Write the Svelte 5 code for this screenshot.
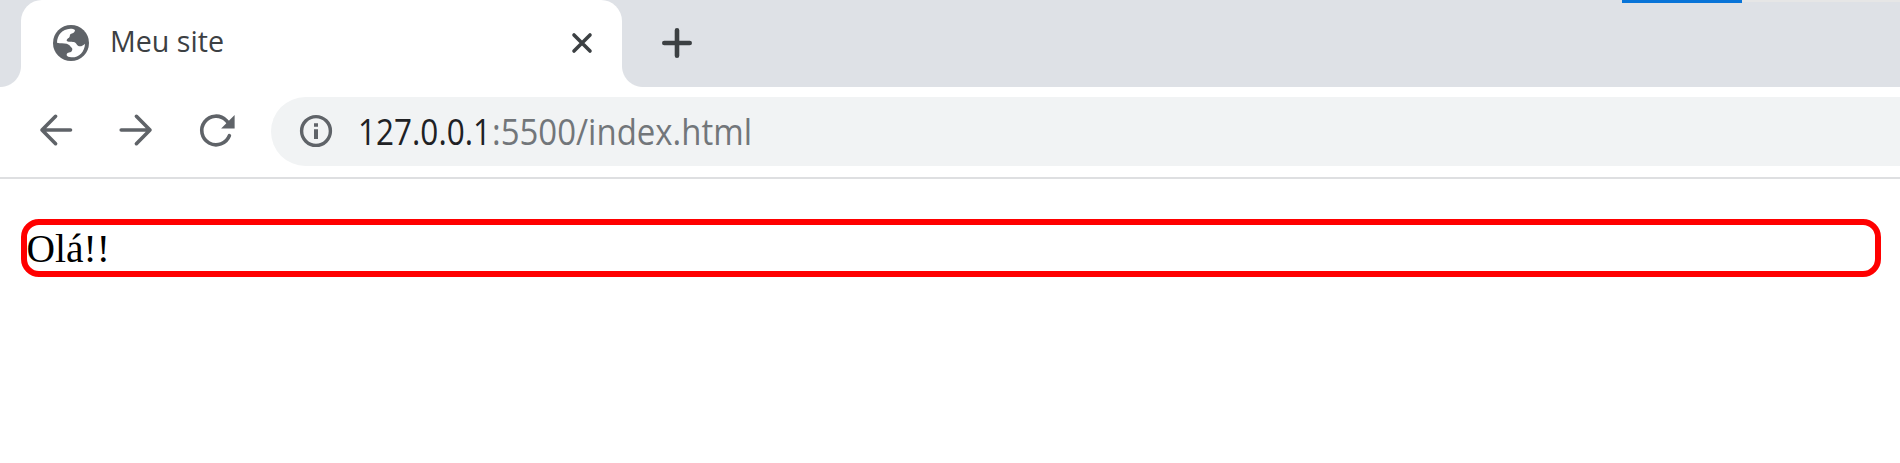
<script>
  const title = 'Meu site';
  const host = '127.0.0.1';
  const path = ':5500/index.html';
  const message = 'Olá!!';
</script>

<div class="browser">
  <header class="strip">
    <div class="tab">
      <svg class="globe" width="40" height="40" viewBox="0 0 120 120">
        <circle cx="60" cy="60" r="54" fill="#5f6368" />
        <path fill="#fff" d="M18 59C18 36 34 18 58 17C64 17 69 18 72 21C72 27 68 31 59 33C55 36 58 40 54 44C50 46 47 48 47 53C51 58 60 55 69 57C76 59 76 66 82 69C89 72 97 67 102 62C101 87 83 104 61 103C54 103 48 101 47 97C46 91 51 88 60 87C64 83 65 79 63 75C58 71 57 65 47 62C39 60 28 62 18 59Z" />
      </svg>
      <svg class="title" width="120" height="50">
        <text x="0" y="35" textLength="114" lengthAdjust="spacingAndGlyphs">{title}</text>
      </svg>
      <svg class="close" width="30" height="30" viewBox="0 0 30 30">
        <path d="M7 7L23 23M23 7L7 23" stroke="#3c4043" stroke-width="3.6" stroke-linecap="round" />
      </svg>
    </div>
    <svg class="plus" width="40" height="40" viewBox="0 0 40 40">
      <path d="M20 7.3V32.7M7.3 20H32.7" stroke="#3c4043" stroke-width="4.6" stroke-linecap="round" />
    </svg>
    <div class="progress"></div>
    <div class="edge"></div>
  </header>

  <nav class="toolbar">
    <svg class="nav" width="40" height="40" viewBox="0 0 40 40">
      <path d="M34.5 20H6M19.6 6.3L6 20L19.6 33.7" />
    </svg>
    <svg class="nav" width="40" height="40" viewBox="0 0 40 40">
      <path d="M5.2 20H34M20.4 6.3L34 20L20.4 33.7" />
    </svg>
    <svg class="nav" width="40" height="40" viewBox="0 0 40 40">
      <path d="M32.4 25.6A14.3 14.3 0 1 1 29.2 10.4L31 12.5" />
      <path class="head" d="M37.6 5V18.5H24.1Z" />
    </svg>
    <div class="address">
      <svg class="info" width="40" height="40" viewBox="0 0 40 40">
        <circle cx="20" cy="20" r="14.4" fill="none" stroke="#5f6368" stroke-width="3.4" />
        <path d="M18 12.2H22V15.8H18ZM18 18.2H22V28H18Z" fill="#5f6368" />
      </svg>
      <svg class="url" width="410" height="69">
        <text class="host" x="0" y="48" textLength="133" lengthAdjust="spacingAndGlyphs">{host}</text>
        <text class="path" x="134" y="48" textLength="260" lengthAdjust="spacingAndGlyphs">{path}</text>
      </svg>
    </div>
  </nav>

  <main>
    <p>{message}</p>
  </main>
</div>

<style>
  :global(body) {
    margin: 0;
    background: #fff;
  }
  .browser {
    width: 1900px;
    height: 463px;
    overflow: hidden;
    background: #fff;
  }
  svg {
    display: block;
    flex: none;
  }
  .strip {
    position: relative;
    display: flex;
    height: 86.6px;
    padding-left: 20.5px;
    background: #dee1e6;
  }
  .tab {
    position: relative;
    display: flex;
    box-sizing: border-box;
    width: 601.5px;
    height: 100%;
    padding-left: 30px;
    background: #fff;
    border-radius: 21px 21px 0 0;
  }
  .tab::before,
  .tab::after {
    content: '';
    position: absolute;
    bottom: 0;
    width: 21px;
    height: 21px;
  }
  .tab::before {
    right: 100%;
    background: radial-gradient(circle at 0 0, transparent 20.5px, #fff 21.5px);
  }
  .tab::after {
    left: 100%;
    background: radial-gradient(circle at 100% 0, transparent 20.5px, #fff 21.5px);
  }
  .globe {
    margin-top: 22.5px;
  }
  .title {
    margin: 17px 0 0 19.5px;
    font: 29.5px 'Open Sans', sans-serif;
    fill: #3c4043;
    overflow: visible;
  }
  .close {
    margin: 28px 0 0 336.5px;
  }
  .plus {
    margin: 23px 0 0 35px;
  }
  .progress {
    position: absolute;
    left: 1622px;
    top: 0;
    width: 120px;
    height: 2.5px;
    background: #0874d8;
  }
  .edge {
    position: absolute;
    left: 1742px;
    right: 0;
    top: 0;
    height: 2px;
    background: #e6e6e6;
  }
  .toolbar {
    display: flex;
    box-sizing: border-box;
    height: 92.4px;
    padding: 10.4px 0 0 35.5px;
    border-bottom: 2px solid #dedfe1;
  }
  .nav {
    margin: 13px 40.5px 0 0;
    fill: none;
    stroke: #5f6368;
    stroke-width: 3.6;
    stroke-linecap: round;
    stroke-linejoin: round;
  }
  .nav .head {
    fill: #5f6368;
    stroke: none;
  }
  .address {
    display: flex;
    flex: 1;
    height: 69.5px;
    margin-left: -6px;
    padding-left: 25px;
    background: #f1f3f4;
    border-radius: 35px 0 0 35px;
  }
  .info {
    margin-top: 14.5px;
  }
  .url {
    margin-left: 21.5px;
    font: 36.5px 'Open Sans', sans-serif;
    overflow: visible;
  }
  .host {
    fill: #202124;
  }
  .path {
    fill: #72767a;
  }
  main {
    padding: 40px 19.5px 0 20.5px;
  }
  p {
    box-sizing: border-box;
    height: 58px;
    margin: 0;
    border: 6px solid #f00;
    border-radius: 18px;
    color: #000;
    font: 39.5px/48px 'Liberation Serif', serif;
  }
</style>
